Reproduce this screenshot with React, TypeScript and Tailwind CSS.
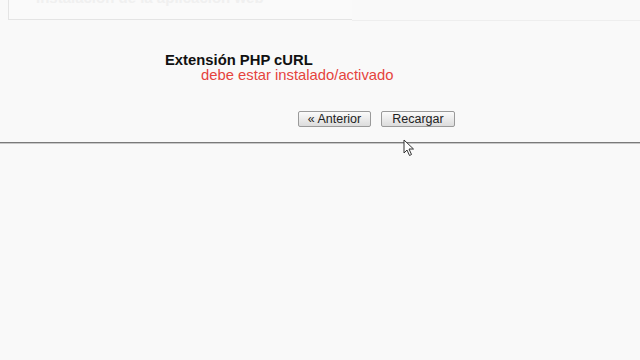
import React from "react";

function Cursor() {
  return (
    <svg width="14" height="18" viewBox="0 0 14 18" className="absolute left-[403px] top-[139px]">
      <path d="M1 1 L1 14 L4 11 L6.5 16.5 L8.5 15.5 L6 10 L10.5 10 Z" fill="#fff" stroke="#333" strokeWidth="1" strokeLinejoin="round" />
    </svg>
  );
}

export default function App() {
  return (
    <div className="relative w-[640px] h-[360px] overflow-hidden bg-[#f9f9f9] font-['Liberation_Sans',Arial,sans-serif]">
      {/* faded header box, cut off at the top */}
      <div className="flex">
        <div className="ml-[8px] w-[344px] h-[20px] border-l border-b border-[#e4e4e4] bg-[#fafafa] flex items-start pl-[27px] overflow-hidden">
          <span className="text-[15px] leading-[10px] -mt-[7px] text-[#f0f0f0] font-bold">Instalación de la aplicación web</span>
        </div>
        <div className="flex-1 h-[21px] border-b border-[#eeeeee]" />
      </div>

      <div className="pt-[32px] pl-[165px]">
        <div className="text-[14.8px] leading-[15px] font-bold text-[#111]">Extensión PHP cURL</div>
        <div className="pl-[36px] text-[14.8px] leading-[14px] text-[#e5433d]">debe estar instalado/activado</div>
      </div>

      <div className="flex gap-[10px] pl-[298px] pt-[29px]">
        <button className="w-[73px] h-[16px] border border-[#9a9a9a] rounded-[2px] bg-gradient-to-b from-[#fbfbfb] to-[#dcdcdc] text-[12.5px] leading-[14px] text-[#222]">
          « Anterior
        </button>
        <button className="w-[74px] h-[16px] border border-[#9a9a9a] rounded-[2px] bg-gradient-to-b from-[#fbfbfb] to-[#dcdcdc] text-[12.5px] leading-[14px] text-[#222]">
          Recargar
        </button>
      </div>

      <div className="mt-[15px] h-[2px] bg-[#7a7a7a] border-b border-[#c8c8c8]" />

      <Cursor />
    </div>
  );
}
